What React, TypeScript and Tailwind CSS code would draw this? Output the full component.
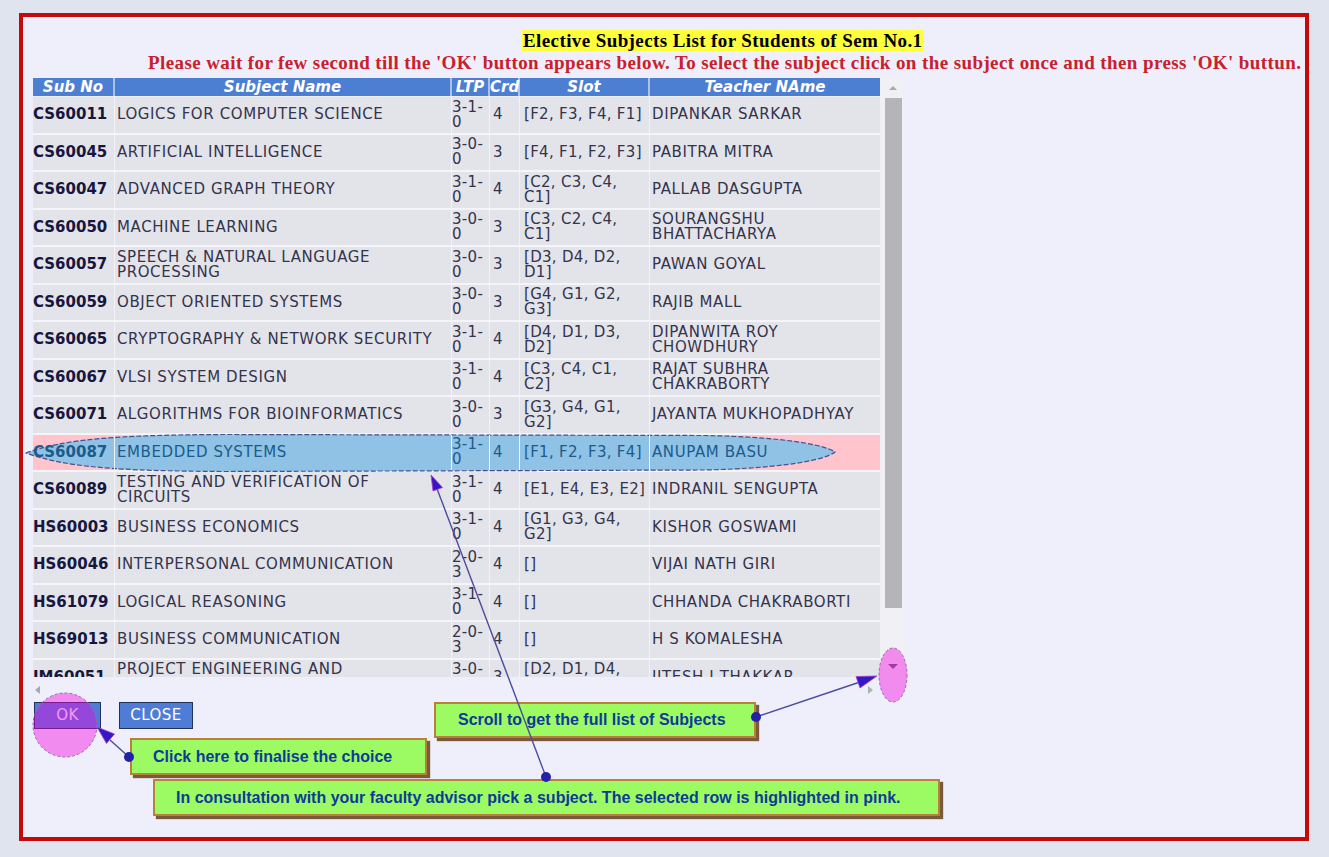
import React from 'react';

type Row = {
  code: string;
  name: string;
  ltp: string;
  crd: string;
  slot: string;
  teacher: string;
  selected?: boolean;
};

const rows: Row[] = [
  { code: 'CS60011', name: 'LOGICS FOR COMPUTER SCIENCE', ltp: '3-1-\n0', crd: '4', slot: '[F2, F3, F4, F1]', teacher: 'DIPANKAR SARKAR' },
  { code: 'CS60045', name: 'ARTIFICIAL INTELLIGENCE', ltp: '3-0-\n0', crd: '3', slot: '[F4, F1, F2, F3]', teacher: 'PABITRA MITRA' },
  { code: 'CS60047', name: 'ADVANCED GRAPH THEORY', ltp: '3-1-\n0', crd: '4', slot: '[C2, C3, C4,\nC1]', teacher: 'PALLAB DASGUPTA' },
  { code: 'CS60050', name: 'MACHINE LEARNING', ltp: '3-0-\n0', crd: '3', slot: '[C3, C2, C4,\nC1]', teacher: 'SOURANGSHU\nBHATTACHARYA' },
  { code: 'CS60057', name: 'SPEECH & NATURAL LANGUAGE\nPROCESSING', ltp: '3-0-\n0', crd: '3', slot: '[D3, D4, D2,\nD1]', teacher: 'PAWAN GOYAL' },
  { code: 'CS60059', name: 'OBJECT ORIENTED SYSTEMS', ltp: '3-0-\n0', crd: '3', slot: '[G4, G1, G2,\nG3]', teacher: 'RAJIB MALL' },
  { code: 'CS60065', name: 'CRYPTOGRAPHY & NETWORK SECURITY', ltp: '3-1-\n0', crd: '4', slot: '[D4, D1, D3,\nD2]', teacher: 'DIPANWITA ROY\nCHOWDHURY' },
  { code: 'CS60067', name: 'VLSI SYSTEM DESIGN', ltp: '3-1-\n0', crd: '4', slot: '[C3, C4, C1,\nC2]', teacher: 'RAJAT SUBHRA\nCHAKRABORTY' },
  { code: 'CS60071', name: 'ALGORITHMS FOR BIOINFORMATICS', ltp: '3-0-\n0', crd: '3', slot: '[G3, G4, G1,\nG2]', teacher: 'JAYANTA MUKHOPADHYAY' },
  { code: 'CS60087', name: 'EMBEDDED SYSTEMS', ltp: '3-1-\n0', crd: '4', slot: '[F1, F2, F3, F4]', teacher: 'ANUPAM BASU', selected: true },
  { code: 'CS60089', name: 'TESTING AND VERIFICATION OF\nCIRCUITS', ltp: '3-1-\n0', crd: '4', slot: '[E1, E4, E3, E2]', teacher: 'INDRANIL SENGUPTA' },
  { code: 'HS60003', name: 'BUSINESS ECONOMICS', ltp: '3-1-\n0', crd: '4', slot: '[G1, G3, G4,\nG2]', teacher: 'KISHOR GOSWAMI' },
  { code: 'HS60046', name: 'INTERPERSONAL COMMUNICATION', ltp: '2-0-\n3', crd: '4', slot: '[]', teacher: 'VIJAI NATH GIRI' },
  { code: 'HS61079', name: 'LOGICAL REASONING', ltp: '3-1-\n0', crd: '4', slot: '[]', teacher: 'CHHANDA CHAKRABORTI' },
  { code: 'HS69013', name: 'BUSINESS COMMUNICATION', ltp: '2-0-\n3', crd: '4', slot: '[]', teacher: 'H S KOMALESHA' },
  { code: 'IM60051', name: 'PROJECT ENGINEERING AND\nMANAGEMENT', ltp: '3-0-\n0', crd: '3', slot: '[D2, D1, D4,\nD3]', teacher: 'JITESH J THAKKAR' },
];

function SubjectRow({ row }: { row: Row }) {
  const txt = row.selected ? 'text-[#1b5b8d]' : 'text-[#34344c]';
  const codeTxt = row.selected ? 'text-[#1b5b8d]' : 'text-[#16163e]';
  const bg = row.selected ? 'bg-[#ffc4cc]' : 'bg-[#e3e3ea]';
  const cell = 'flex items-center h-full border-r border-[#f2f2f7] whitespace-pre-line leading-[15px]';

  return (
    <div className={`relative flex h-[37.5px] border-b-2 border-[#f4f4f9] ${bg}`}>
      {row.selected && (
        // blue lens drawn on the screenshot to mark the picked row
        <svg
          className="absolute -left-[8px] -top-[2px] w-[812px] h-[40px]"
          viewBox="0 0 812 40"
          preserveAspectRatio="none"
        >
          <path
            d="M1 20 C 40 6, 90 2, 200 1.5 L 680 2.5 C 760 4, 800 12, 810 19 C 800 27, 760 35, 680 37 L 200 38.5 C 90 38, 40 34, 1 20 Z"
            fill="#8fc2e4"
            stroke="#46508c"
            strokeWidth="1.2"
            strokeDasharray="5 2"
          />
        </svg>
      )}
      <div className={`relative ${cell} w-[82px] font-bold ${codeTxt}`}>{row.code}</div>
      <div className={`relative ${cell} w-[337px] pl-[2px] tracking-[0.6px] ${txt}`}>{row.name}</div>
      <div className={`relative ${cell} w-[38px] tracking-[0.3px] ${txt}`}>{row.ltp}</div>
      <div className={`relative ${cell} w-[30px] pl-[3px] ${txt}`}>{row.crd}</div>
      <div className={`relative ${cell} w-[130px] pl-[4px] whitespace-pre tracking-[0.3px] ${txt}`}>{row.slot}</div>
      <div className={`relative ${cell} w-[230px] pl-[2px] tracking-[0.6px] border-r-0 ${txt}`}>{row.teacher}</div>
    </div>
  );
}

function Callout({ className, children }: { className: string; children: React.ReactNode }) {
  return (
    <div
      className={`absolute z-10 flex items-center whitespace-nowrap bg-[#9cfb62] border-2 border-[#b9803a] shadow-[3px_3px_1px_rgba(100,65,25,0.85)] font-['Liberation_Sans',Arial,sans-serif] font-bold text-[16px] text-[#0d3a9b] ${className}`}
    >
      {children}
    </div>
  );
}

export default function App() {
  return (
    <div className="relative w-[1329px] h-[857px] overflow-hidden bg-[#dfe4ee] pt-[13px] pl-[19px]">
      <div className="w-[1290px] h-[828px] border-4 border-[#c40a0a] bg-[#eeeffa] flex flex-col">
        {/* Heading */}
        <div className="mt-[14px] h-[20px] pl-[499px] whitespace-nowrap font-['Liberation_Serif',serif] font-bold text-[19px] tracking-[0.4px] leading-[20px] text-black">
          <span className="bg-[#ffff3c] px-[1px]">Elective Subjects List for Students of Sem No.1</span>
        </div>
        <div className="mt-[2px] h-[19px] pl-[125px] whitespace-nowrap font-['Liberation_Serif',serif] font-bold text-[19px] tracking-[0.4px] leading-[19px] text-[#c8202c]">
          Please wait for few second till the 'OK' button appears below. To select the subject click on the subject once and then press 'OK' buttun.
        </div>

        {/* Scrollable list */}
        <div className="mt-[6px] flex h-[599px] font-['DejaVu_Sans',Verdana,sans-serif] text-[15px]">
          <div className="w-[857px] h-full pl-[10px] overflow-hidden">
            <div className="flex h-[18px] mb-[1px] bg-[#4c7ed2] text-white font-bold italic leading-[18px]">
              <div className="w-[82px] text-center border-r-2 border-[#a9c2ee]">Sub No</div>
              <div className="w-[337px] text-center border-r-2 border-[#a9c2ee]">Subject Name</div>
              <div className="w-[38px] text-center border-r-2 border-[#a9c2ee]">LTP</div>
              <div className="w-[30px] text-center border-r-2 border-[#a9c2ee]">Crd</div>
              <div className="w-[130px] text-center border-r-2 border-[#a9c2ee]">Slot</div>
              <div className="w-[230px] text-center">Teacher NAme</div>
            </div>
            {rows.map((r) => (
              <SubjectRow key={r.code} row={r} />
            ))}
          </div>
          <div className="w-[23px] h-full flex flex-col bg-[#f0f0f5] pl-[5px]">
            <div className="h-[20px] flex items-center justify-center pr-[2px]">
              <div className="w-0 h-0 border-l-[4px] border-r-[4px] border-b-[4px] border-l-transparent border-r-transparent border-b-[#a8a8b0]" />
            </div>
            <div className="h-[510px] w-[17px] bg-[#b4b4b9]" />
            <div className="flex-1" />
          </div>
        </div>

        {/* Horizontal scroll bar */}
        <div className="h-[19px] w-[880px] flex items-center justify-between pt-[6px] pl-[12px] pr-[30px]">
          <div className="w-0 h-0 border-t-[4px] border-b-[4px] border-r-[5px] border-t-transparent border-b-transparent border-r-[#a8a8b0]" />
          <div className="w-0 h-0 border-t-[4px] border-b-[4px] border-l-[5px] border-t-transparent border-b-transparent border-l-[#a8b8a8]" />
        </div>

        {/* Buttons */}
        <div className="mt-[6px] flex gap-[18px] pl-[11px] font-['DejaVu_Sans',Verdana,sans-serif]">
          <button className="w-[67px] h-[27px] bg-[#4f7dd6] border border-[#22305e] text-white text-[15px] tracking-[0.5px]">
            OK
          </button>
          <button className="w-[74px] h-[27px] bg-[#4f7dd6] border border-[#22305e] text-white text-[15px] tracking-[0.5px]">
            CLOSE
          </button>
        </div>
      </div>

      {/* Annotation callouts */}
      <Callout className="left-[434px] top-[702px] w-[322px] h-[36px] pl-[22px]">
        Scroll to get the full list of Subjects
      </Callout>
      <Callout className="left-[130px] top-[738px] w-[297px] h-[37px] pl-[21px]">
        Click here to finalise the choice
      </Callout>
      <Callout className="left-[153px] top-[779px] w-[787px] h-[37px] pl-[21px]">
        In consultation with your faculty advisor pick a subject. The selected row is highlighted in pink.
      </Callout>

      {/* Annotation shapes and arrows */}
      <svg className="absolute inset-0 z-20 w-[1329px] h-[857px] pointer-events-none" viewBox="0 0 1329 857">
        <circle cx="65" cy="725" r="32" fill="rgba(245,0,225,0.42)" stroke="#9a6ab4" strokeWidth="1" strokeDasharray="3 2" />
        <ellipse cx="893" cy="675" rx="14" ry="27" fill="rgba(245,0,225,0.42)" stroke="#9a6ab4" strokeWidth="1" strokeDasharray="3 2" />
        <polygon points="888,664 898,664 893,669" fill="#a43aa8" />

        <g stroke="#4c4c9c" strokeWidth="1.4">
          <line x1="546" y1="777" x2="436" y2="486" />
          <line x1="756" y1="717" x2="860" y2="682" />
          <line x1="129" y1="757" x2="110" y2="740" />
        </g>
        <g fill="#3218c8" stroke="#b040c0" strokeWidth="0.8">
          <polygon points="431,475 442.5,487.5 433,491" />
          <polygon points="877,676 860,688 856,676.5" />
          <polygon points="97,727 114.5,734 106.5,743.5" />
        </g>
        <g fill="#2222a8">
          <circle cx="546" cy="777" r="5" />
          <circle cx="756" cy="717" r="5" />
          <circle cx="129" cy="757" r="5" />
        </g>
      </svg>
    </div>
  );
}
